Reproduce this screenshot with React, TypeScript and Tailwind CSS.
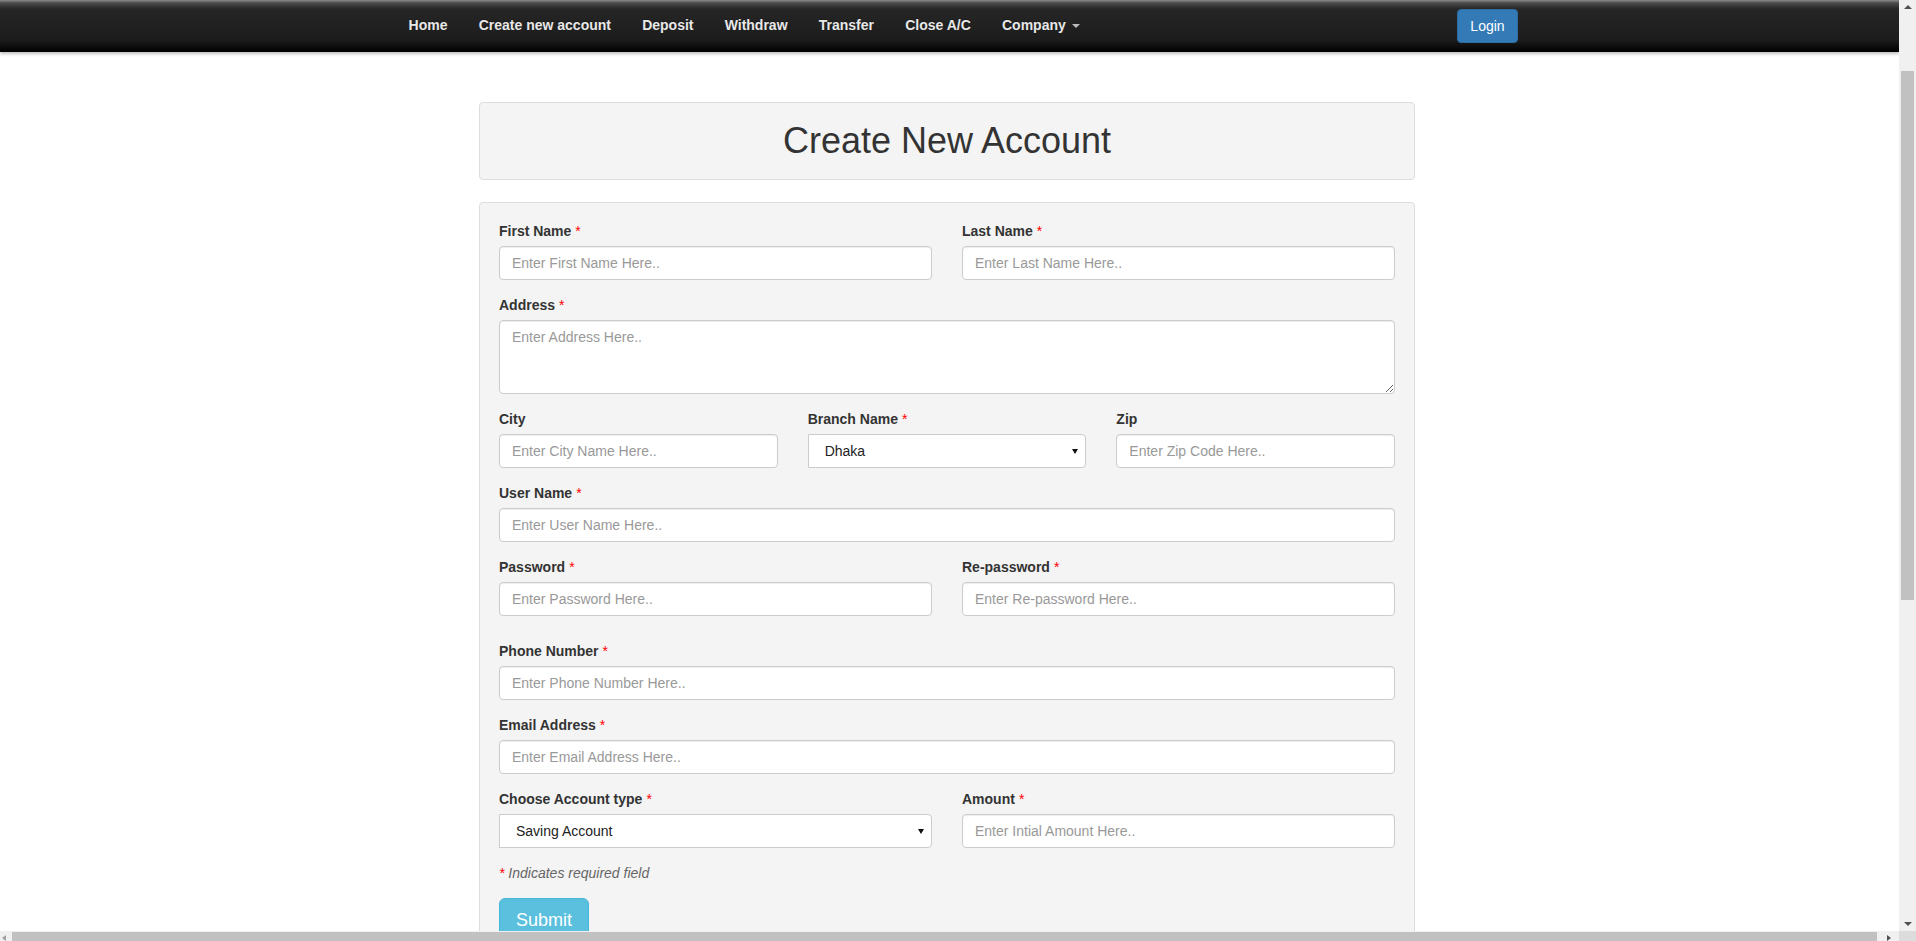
import React from "react";

const navItems = ["Home", "Create new account", "Deposit", "Withdraw", "Transfer", "Close A/C"];

function Req() {
  return <span className="ml-[4px] font-normal text-[#ff0000]">*</span>;
}

function Label({ text, required }: { text: string; required?: boolean }) {
  return (
    <div className="mb-[5px] block text-[14px] font-bold leading-[20px] text-[#333]">
      {text}
      {required && <Req />}
    </div>
  );
}

function Input({ placeholder }: { placeholder: string }) {
  return (
    <input
      type="text"
      placeholder={placeholder}
      className="block h-[34px] w-full rounded-[4px] border border-[#ccc] bg-white px-[12px] text-[14px] leading-[20px] text-[#555] shadow-[inset_0_1px_1px_rgba(0,0,0,0.075)] outline-none placeholder:text-[#999]"
    />
  );
}

function Select({ value }: { value: string }) {
  return (
    <div className="relative flex h-[34px] w-full items-center rounded-r-[4px] border border-[#ccc] bg-white pl-[16px] text-[14px] text-[#222]">
      {value}
      <span className="absolute right-[7px] top-[14px] h-0 w-0 border-l-[3px] border-r-[3px] border-t-[5px] border-l-transparent border-r-transparent border-t-[#111]" />
    </div>
  );
}

function Group({ label, required, children }: { label: string; required?: boolean; children: React.ReactNode }) {
  return (
    <div className="mb-[15px]">
      <Label text={label} required={required} />
      {children}
    </div>
  );
}

export default function App() {
  return (
    <div className="flex h-[941px] w-[1916px] flex-col overflow-hidden bg-white font-['Liberation_Sans',Arial,sans-serif] text-[14px] text-[#333]">
      <div className="flex min-h-0 flex-1">
        <div className="min-w-0 flex-1 overflow-hidden bg-white">
          {/* Navbar */}
          <div className="relative flex h-[52px] items-start bg-[linear-gradient(to_bottom,#8a8a8a_0px,#4a4a4a_3px,#262626_9px,#1c1c1c_40px,#0a0a0a_48px,#000_52px)] pl-[393px] pr-[381px] shadow-[0_2px_3px_rgba(0,0,0,0.25)]">
            <ul className="flex">
              {navItems.map((n) => (
                <li
                  key={n}
                  className="px-[15.6px] py-[15px] text-[14px] font-bold leading-[20px] text-[#e8e8e8] [text-shadow:0_-1px_0_rgba(0,0,0,0.25)]"
                >
                  {n}
                </li>
              ))}
              <li className="flex items-center px-[15.6px] py-[15px] text-[14px] font-bold leading-[20px] text-[#e8e8e8] [text-shadow:0_-1px_0_rgba(0,0,0,0.25)]">
                Company
                <span className="ml-[6px] mt-[1px] inline-block h-0 w-0 border-l-[4px] border-r-[4px] border-t-[4px] border-l-transparent border-r-transparent border-t-[#bbb]" />
              </li>
            </ul>
            <div className="flex-1" />
            <div className="mt-[9px] flex h-[34px] w-[61px] items-center justify-center rounded-[4px] border border-[#2e6da4] bg-[#337ab7] text-[14px] leading-[20px] text-white">
              Login
            </div>
          </div>

          {/* Content */}
          <div className="ml-[479px] w-[936px]">
            <div className="mt-[50px] flex h-[78px] items-center justify-center rounded-[4px] border border-[#ddd] bg-[#f4f4f4]">
              <h1 className="text-[36px] font-normal leading-[1.1] text-[#333]">Create New Account</h1>
            </div>

            <div className="mt-[22px] rounded-[4px] border border-[#ddd] bg-[#f4f4f4] px-[19px] pt-[18px] pb-[20px]">
              <div className="grid grid-cols-2 gap-x-[30px]">
                <Group label="First Name" required>
                  <Input placeholder="Enter First Name Here.." />
                </Group>
                <Group label="Last Name" required>
                  <Input placeholder="Enter Last Name Here.." />
                </Group>
              </div>

              <Group label="Address" required>
                <textarea
                  placeholder="Enter Address Here.."
                  className="block h-[74px] w-full rounded-[4px] border border-[#ccc] bg-white px-[12px] py-[6px] text-[14px] leading-[20px] text-[#555] shadow-[inset_0_1px_1px_rgba(0,0,0,0.075)] outline-none placeholder:text-[#999]"
                />
              </Group>

              <div className="grid grid-cols-3 gap-x-[30px]">
                <Group label="City">
                  <Input placeholder="Enter City Name Here.." />
                </Group>
                <Group label="Branch Name" required>
                  <Select value="Dhaka" />
                </Group>
                <Group label="Zip">
                  <Input placeholder="Enter Zip Code Here.." />
                </Group>
              </div>

              <Group label="User Name" required>
                <Input placeholder="Enter User Name Here.." />
              </Group>

              <div className="grid grid-cols-2 gap-x-[30px]">
                <Group label="Password" required>
                  <Input placeholder="Enter Password Here.." />
                </Group>
                <Group label="Re-password" required>
                  <Input placeholder="Enter Re-password Here.." />
                </Group>
              </div>

              <div className="mt-[10px]">
                <Group label="Phone Number" required>
                  <Input placeholder="Enter Phone Number Here.." />
                </Group>
              </div>

              <Group label="Email Address" required>
                <Input placeholder="Enter Email Address Here.." />
              </Group>

              <div className="grid grid-cols-2 gap-x-[30px]">
                <Group label="Choose Account type" required>
                  <Select value="Saving Account" />
                </Group>
                <Group label="Amount" required>
                  <Input placeholder="Enter Intial Amount Here.." />
                </Group>
              </div>

              <p className="mb-[15px] text-[14px] italic leading-[20px] text-[#666]">
                <span className="text-[#ff0000]">*</span> Indicates required field
              </p>

              <div className="inline-flex h-[46px] items-center rounded-[6px] border border-[#46b8da] bg-[#5bc0de] px-[16px] text-[18px] leading-[1.33] text-white">
                Submit
              </div>
            </div>
          </div>
        </div>

        {/* Vertical scrollbar */}
        <div className="relative w-[17px] shrink-0 bg-[#f0f0f0]">
          <span className="absolute left-[5px] top-[5px] h-0 w-0 border-b-[4px] border-l-[4px] border-r-[4px] border-b-[#505050] border-l-transparent border-r-transparent" />
          <div className="absolute left-[2px] right-[2px] top-[71px] h-[529px] bg-[#c1c1c1]" />
          <span className="absolute bottom-[5px] left-[5px] h-0 w-0 border-l-[4px] border-r-[4px] border-t-[4px] border-l-transparent border-r-transparent border-t-[#505050]" />
        </div>
      </div>

      {/* Horizontal scrollbar */}
      <div className="flex h-[10px] shrink-0">
        <div className="relative flex-1 bg-[#f0f0f0]">
          <span className="absolute left-[2px] top-[4px] h-0 w-0 border-b-[3px] border-r-[4px] border-t-[3px] border-b-transparent border-r-[#a0a0a0] border-t-transparent" />
          <div className="absolute bottom-0 left-[12px] right-[22px] top-[1px] bg-[#c1c1c1]" />
          <span className="absolute right-[8px] top-[4px] h-0 w-0 border-b-[3px] border-l-[4px] border-t-[3px] border-b-transparent border-l-[#505050] border-t-transparent" />
        </div>
        <div className="w-[17px] bg-[#dcdcdc]" />
      </div>
    </div>
  );
}
